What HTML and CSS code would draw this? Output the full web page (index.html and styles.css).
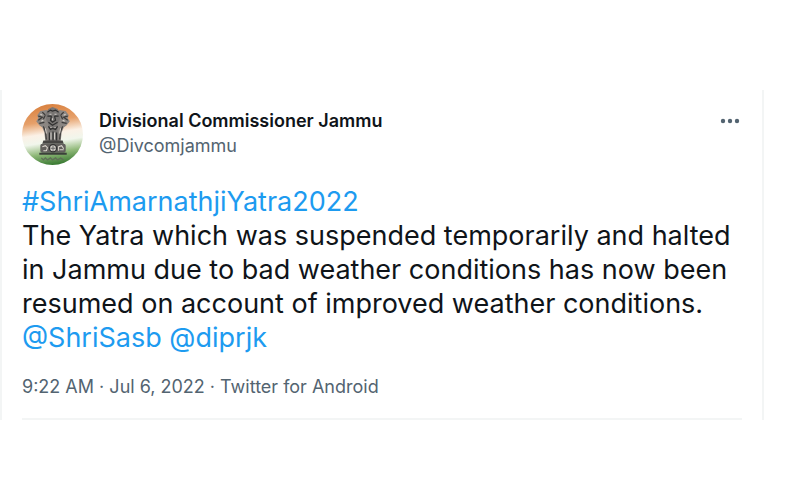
FILE: index.html
```html
<!DOCTYPE html>
<html lang="en">
<head>
  <meta charset="UTF-8" />
  <meta name="viewport" content="width=device-width, initial-scale=1.0"/>
  <title>Divisional Commissioner Jammu on Twitter</title>
  <link rel="stylesheet" href="styles.css">
</head>
<body>

  <article class="tweet">
    <header class="tweet-header">
      <svg class="avatar" viewBox="0 0 60 60" role="img" aria-label="Divisional Commissioner Jammu">
        <defs>
          <linearGradient id="flag" x1="0.4" y1="0" x2="0.55" y2="1">
            <stop offset="0" stop-color="#d9813f"/>
            <stop offset="0.28" stop-color="#e6a06a"/>
            <stop offset="0.48" stop-color="#fbf1e6"/>
            <stop offset="0.62" stop-color="#f1f6ec"/>
            <stop offset="0.8" stop-color="#8fb878"/>
            <stop offset="1" stop-color="#35772f"/>
          </linearGradient>
          <clipPath id="round"><circle cx="30" cy="30" r="30"/></clipPath>
        </defs>
        <g clip-path="url(#round)">
          <rect width="60" height="60" fill="url(#flag)"/>
          <!-- side lions -->
          <path d="M24 6l-6 1-3 4 1 3-2 3 3 4 3 2 2 5 1 9h5V8z" fill="#8b8682"/>
          <path d="M37 6l6 1 3 4-1 3 2 3-3 4-3 2-2 5-1 9h-5V8z" fill="#8b8682"/>
          <path d="M16 12l4 1-4 3M20 8l3 3-2 4M17 19l5-1M21 22l2 5 1 8M45 12l-4 1 4 3M41 8l-3 3 2 4M44 19l-5-1M40 22l-2 5-1 8" fill="none" stroke="#3b3a39" stroke-width="1.200"/>
          <path d="M18 10l2 1M19 17l2-1M43 10l-2 1M42 17l-2-1M23 24l1 5M38 24l-1 5" stroke="#d6d0c9"/>
          <!-- front lion -->
          <path d="M26 5l4-2 5 2 3 5-1 6-2 4v8l1 9H25l1-9v-8l-2-4-1-6z" fill="#797674"/>
          <path d="M25 8l3-2 2 1 3-1 3 2M25 12h4M32 12h4M29 12l-1 4 2 2 3-2-1-4M26 18l4 3 5-3M26 22l2 3 2-1 3 1 2-3M27 28v8M30.500 27v9M34 28v8" fill="none" stroke="#303030" stroke-width="1.200"/>
          <path d="M27 10h2M32 10h2M30 14v2M28 23h1M32 23h1M28.500 28v7M32 28v7" stroke="#d0ccc7"/>
          <!-- abacus and wheel -->
          <path d="M21 36h19l1 3H20z" fill="#464543"/>
          <rect x="18" y="39" width="25" height="9" rx="2" fill="#62605d"/>
          <circle cx="30.500" cy="43.500" r="3.500" fill="#d3d0c9" stroke="#333" stroke-width="1.200"/>
          <path d="M30.500 41v5M28 43.500h5" stroke="#666"/>
          <path d="M20 42l3-1 2 2-1 3M36 46v-4l3-1 2 3M21 46h3M37 45h4" fill="none" stroke="#dcd7cf"/>
          <path d="M17 48h27v2H17z" fill="#3b403a"/>
          <path d="M19 53l2 2 2-2 2 2 3-2 2 2 3-2 2 2 3-2 3 2" fill="none" stroke="#5f6d58" stroke-width="1.200"/>
        </g>
      </svg>
      <div class="author">
        <a class="name" href="#">Divisional Commissioner Jammu</a>
        <a class="handle" href="#">@Divcomjammu</a>
      </div>
      <button class="more" type="button" aria-label="More">
        <svg viewBox="0 0 20 6" aria-hidden="true">
          <circle cx="3" cy="3" r="2.200"/>
          <circle cx="10" cy="3" r="2.200"/>
          <circle cx="17" cy="3" r="2.200"/>
        </svg>
      </button>
    </header>

    <p class="tweet-text">
      <a href="#">#ShriAmarnathjiYatra2022</a><br>
      The Yatra which was suspended temporarily and halted in Jammu due to bad weather conditions has now been resumed on account of improved weather conditions.<br>
      <a href="#">@ShriSasb</a> <a href="#">@diprjk</a>
    </p>

    <footer class="tweet-meta">
      <a href="#">9:22 AM · Jul 6, 2022</a> · <a href="#">Twitter for Android</a>
    </footer>
  </article>

</body>
</html>
```

FILE: styles.css
```css
:root {
  --text: #0f1419;
  --muted: #536471;
  --link: #1d9bf0;
  --line: #f3f5f5;
}

body {
  margin: 0;
  background: #fff;
  color: var(--text);
  font-family: Inter, "Liberation Sans", Arial, sans-serif;
}

a {
  color: inherit;
  text-decoration: none;
}

.tweet {
  margin: 90px 24px 0 0;
  padding: 14px 20px 0;
  border-left: 2px solid var(--line);
  border-right: 2px solid var(--line);
}

.tweet-header {
  display: flex;
  align-items: flex-start;
  gap: 16px;
}

.avatar {
  width: 61px;
  height: 61px;
  flex: none;
}

.author {
  display: flex;
  flex-direction: column;
  flex: 1;
  padding-top: 4px;
  font-size: 18px;
  line-height: 25px;
}

.name {
  font-weight: 600;
}

.handle {
  color: var(--muted);
}

.more {
  display: flex;
  margin-top: 8px;
  padding: 6px 2px;
  border: none;
  background: none;
  cursor: pointer;
}

.more svg {
  width: 20px;
  height: 6px;
  fill: var(--muted);
}

.tweet-text {
  margin: 20px 0 0;
  font-size: 27px;
  line-height: 34px;
}

.tweet-text a {
  color: var(--link);
}

.tweet-meta {
  margin-top: 20px;
  padding-bottom: 19px;
  border-bottom: 2px solid var(--line);
  color: var(--muted);
  font-size: 18px;
  line-height: 24px;
}
```
